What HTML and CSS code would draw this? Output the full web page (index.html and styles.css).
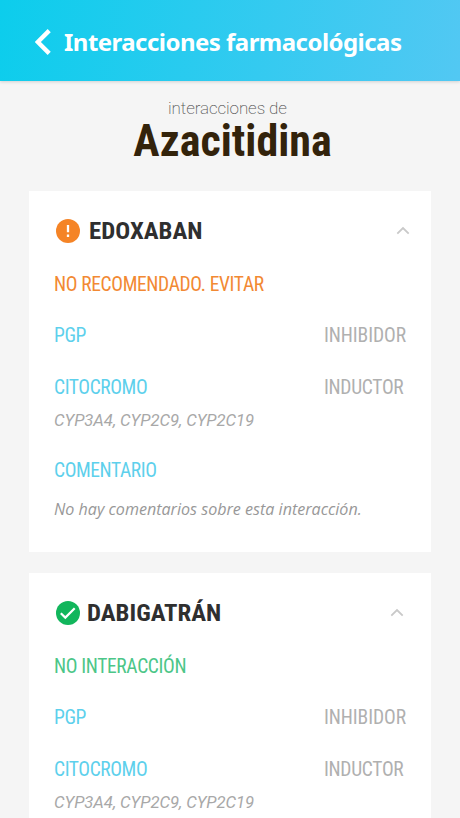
FILE: index.html
```html
<!DOCTYPE html>
<html lang="es">
<head>
  <meta charset="UTF-8">
  <meta name="viewport" content="width=device-width, initial-scale=1.0">
  <title>Interacciones farmacológicas</title>
  <link rel="stylesheet" href="styles.css">
</head>
<body>
  <header class="topbar">
    <svg class="back" viewBox="0 0 16 26"><path d="M14.2 1.6 L2.8 13 L14.2 24.4"/></svg>
    <h1 class="topbar-title">Interacciones farmacológicas</h1>
  </header>

  <main class="content">
    <div class="drug">
      <p class="drug-label">interacciones de</p>
      <h2 class="drug-name">Azacitidina</h2>
    </div>

    <section class="card">
      <div class="card-header">
        <svg class="icon" viewBox="0 0 24 24"><circle cx="12" cy="12" r="12" fill="#f58426"/><path d="M12 6v7.2M12 15.6v2.4" stroke="#fff" stroke-width="2.3"/></svg>
        <h3 class="card-title">EDOXABAN</h3>
        <svg class="chevron" viewBox="0 0 14 9"><path d="M1.3 7.7 L7 2 L12.7 7.7"/></svg>
      </div>
      <p class="status warning">NO RECOMENDADO. EVITAR</p>
      <div class="row"><span class="key">PGP</span><span class="value">INHIBIDOR</span></div>
      <div class="row"><span class="key">CITOCROMO</span><span class="value">INDUCTOR</span></div>
      <p class="enzymes">CYP3A4, CYP2C9, CYP2C19</p>
      <p class="key comment-title">COMENTARIO</p>
      <p class="comment">No hay comentarios sobre esta interacción.</p>
    </section>

    <section class="card safe">
      <div class="card-header">
        <svg class="icon" viewBox="0 0 24 24"><circle cx="12" cy="12" r="12" fill="#12b65c"/><path d="M4.8 12.2l4.5 4.4 9.4-9.4" fill="none" stroke="#fff" stroke-width="2.2"/></svg>
        <h3 class="card-title">DABIGATRÁN</h3>
        <svg class="chevron" viewBox="0 0 14 9"><path d="M1.3 7.7 L7 2 L12.7 7.7"/></svg>
      </div>
      <p class="status ok">NO INTERACCIÓN</p>
      <div class="row"><span class="key">PGP</span><span class="value">INHIBIDOR</span></div>
      <div class="row"><span class="key">CITOCROMO</span><span class="value">INDUCTOR</span></div>
      <p class="enzymes">CYP3A4, CYP2C9, CYP2C19</p>
    </section>
  </main>
</body>
</html>
```
FILE: styles.css
```css
* {
  box-sizing: border-box;
  margin: 0;
  padding: 0;
}

body {
  background: #f5f5f5;
  font-family: 'Roboto Condensed', Roboto, sans-serif;
}

/* Header */
.topbar {
  display: flex;
  align-items: center;
  height: 81px;
  padding: 2px 0 0 35px;
  background: linear-gradient(100deg, #0ccdec, #52c8f3);
  box-shadow: 0 1px 3px rgba(0, 0, 0, 0.15);
}

.back {
  width: 16px;
  height: 26px;
  fill: none;
  stroke: #fff;
  stroke-width: 4.4;
}

.topbar-title {
  margin-left: 13px;
  color: #fff;
  font-family: 'Noto Sans', sans-serif;
  font-size: 24px;
  letter-spacing: -0.53px;
  line-height: 32px;
  white-space: nowrap;
}

/* Selected drug */
.content {
  padding: 16px 29px 0;
}

.drug {
  height: 94px;
  padding-left: 5px;
  text-align: center;
}

.drug-label {
  padding-right: 10px;
  color: #555;
  font-family: Roboto, sans-serif;
  font-size: 17px;
  font-weight: 200;
  letter-spacing: -0.1px;
  line-height: 22px;
}

.drug-name {
  color: #33230b;
  font-size: 44px;
  line-height: 45px;
}

/* Interaction cards */
.card {
  height: 361px;
  margin-bottom: 21px;
  padding: 23px 25px 0;
  background: #fff;
}

.card.safe {
  height: 245px;
  margin-bottom: 0;
}

.card-header {
  display: flex;
  align-items: center;
  height: 34px;
  padding-left: 2px;
}

.icon {
  width: 24px;
  height: 24px;
}

.card-title {
  margin-left: 9px;
  color: #2f2f2f;
  font-size: 24.8px;
  line-height: 34px;
}

.safe .card-title {
  margin-left: 7px;
}

.chevron {
  width: 14px;
  height: 9px;
  margin: -2px -4px 0 auto;
  fill: none;
  stroke: #c9c9c9;
  stroke-width: 1.8;
}

.safe .chevron {
  margin-right: 2px;
}

.status {
  margin-top: 24px;
  font-size: 19.5px;
  letter-spacing: -0.35px;
  line-height: 25px;
}

.warning {
  color: #f28933;
}

.ok {
  color: #4cc688;
}

.row {
  display: flex;
  justify-content: space-between;
  margin-top: 27px;
  font-size: 19.5px;
  line-height: 24.5px;
}

.key {
  color: #5dd0ec;
  letter-spacing: -0.4px;
}

.value {
  width: 82px;
  color: #b0b0b0;
  letter-spacing: -0.08px;
}

.row + .row .value {
  letter-spacing: -0.3px;
}

.enzymes {
  margin-top: 9px;
  color: #a8a8a8;
  font-family: Roboto, sans-serif;
  font-size: 16.7px;
  font-style: italic;
  letter-spacing: -0.05px;
  line-height: 24px;
}

.comment-title {
  margin-top: 26px;
  font-size: 19.5px;
  line-height: 24px;
}

.comment {
  margin-top: 14px;
  color: #989898;
  font-family: 'Open Sans', sans-serif;
  font-size: 16.1px;
  font-style: italic;
  line-height: 24px;
  white-space: nowrap;
}
```
